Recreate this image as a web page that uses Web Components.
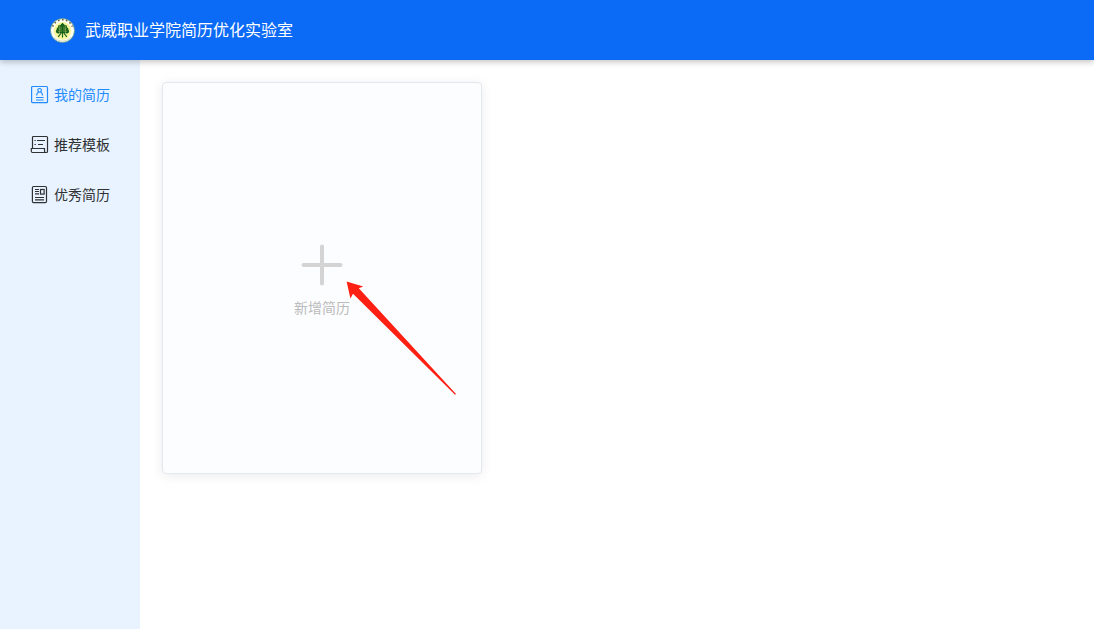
<!DOCTYPE html>
<html lang="zh-CN">
<head>
<meta charset="utf-8">
<meta name="viewport" content="width=device-width, initial-scale=1">
<title>武威职业学院简历优化实验室</title>
<style>
body { margin: 0; font-family: "Liberation Sans", "Noto Sans CJK SC", sans-serif; font-size: 14px; color: #303133; background: #fff; }
</style>
</head>
<body>
<resume-app></resume-app>

<template id="app-tpl">
<style>
:host { display: flex; flex-direction: column; min-height: 100vh; }
.body { display: flex; flex: 1; }
main { flex: 1; padding: 22px; }
</style>
<lab-header>武威职业学院简历优化实验室</lab-header>
<div class="body">
  <side-nav>
    <nav-item active>
      <svg slot="icon" width="20" height="20" viewBox="0 0 20 20" fill="none" stroke="currentColor" stroke-width="1.2"><rect x="1.6" y="1.5" width="15.9" height="16.2" rx="1"/><circle cx="9.6" cy="5.3" r="1.8"/><path d="M6.6 10.6q0-2.4 2-3.6M12.6 10.6q0-2.4-2-3.6M6 12.5h7.6M6 15h7.6"/></svg>
      我的简历
    </nav-item>
    <nav-item>
      <svg slot="icon" width="20" height="20" viewBox="0 0 20 20" fill="none" stroke="currentColor" stroke-width="1.2"><path d="M2.5 13.5V2.5Q2.5 1.5 3.5 1.5H16.5Q17.5 1.5 17.5 2.5V16.5Q17.5 17.5 16.5 17.5H2.5Q1.3 17.5 1.3 16V13.5H14.5V16.2Q14.5 17.5 15.8 17.5M4.5 5.5h1.3M7 5.5h8M4.5 9.5h1.3M8 9.5h5"/></svg>
      推荐模板
    </nav-item>
    <nav-item>
      <svg slot="icon" width="20" height="20" viewBox="0 0 20 20" fill="none" stroke="currentColor" stroke-width="1.2"><rect x="2.4" y="1.5" width="14.1" height="16.2" rx="1.2"/><path d="M5 4.5h4M5 6.5h4M5 8.8h4M5 12.5h9M5 14.8h9"/><rect x="10.5" y="4.5" width="3.6" height="4.6"/></svg>
      优秀简历
    </nav-item>
  </side-nav>
  <main><add-card>新增简历</add-card></main>
</div>
</template>

<template id="header-tpl">
<style>
:host { display: block; position: relative; z-index: 1; }
header { display: flex; align-items: center; gap: 10px; height: 60px; padding: 0 50px; background: #0b6af6; color: #fff; box-shadow: 0 2px 6px rgba(0,0,0,.24); }
h1 { margin: 0; padding-top: 2px; font-size: 16px; line-height: 24px; font-weight: 400; }
svg { flex: none; }
</style>
<header>
  <svg width="25" height="25" viewBox="0 0 25 25" aria-hidden="true">
    <circle cx="12.5" cy="12.5" r="12" fill="#fffff4" stroke="#4f927e" stroke-width=".7"/>
    <path d="M2.6 8.6A10.6 10.6 0 0 1 22.4 8.6" fill="none" stroke="#6e6040" stroke-width="1.6" stroke-dasharray="1.6 2.4"/>
    <path d="M4.2 19A10.4 10.4 0 0 0 20.8 19" fill="none" stroke="#d8d8c0" stroke-width="1"/>
    <circle cx="12.5" cy="12.8" r="8.9" fill="#f8f69c"/>
    <g fill="#14601a">
      <path d="M12.5 4.8 15 7.2V15h-5V7.2Z"/>
      <path d="M9.7 6.8Q7.8 7.2 8 9.2 6.2 9.8 6.6 11.7 5.2 12.8 6.2 14.6 7.6 16.2 9.7 15.2ZM15.3 6.8Q17.2 7.2 17 9.2 18.8 9.8 18.4 11.7 19.8 12.8 18.8 14.6 17.4 16.2 15.3 15.2Z"/>
    </g>
    <path d="M12.5 14.5v5M11.2 15 8.2 18.8M13.8 15l3 3.8" fill="none" stroke="#14601a" stroke-width="1.2"/>
    <path d="M11 8.5v5.5M14 8.5v5.5M8.3 10.2l1.8 1.6M16.7 10.2l-1.8 1.6M7.8 13l2 1M17.2 13l-2 1" fill="none" stroke="#c4cf62" stroke-width=".5"/>
  </svg>
  <h1><slot></slot></h1>
</header>
</template>

<template id="nav-tpl">
<style>
:host { display: block; flex: none; background: #e8f3ff; }
nav { width: 140px; padding-top: 10px; }
</style>
<nav><slot></slot></nav>
</template>

<template id="item-tpl">
<style>
:host { display: block; color: #303133; }
:host([active]) { color: #1f8bff; }
a { display: flex; align-items: center; gap: 4px; height: 50px; padding-left: 30px; color: inherit; text-decoration: none; line-height: 20px; }
.icon { display: flex; }
</style>
<a href="#"><span class="icon"><slot name="icon"></slot></span><span><slot></slot></span></a>
</template>

<template id="card-tpl">
<style>
:host { display: block; position: relative; max-width: 320px; }
button { display: flex; flex-direction: column; align-items: center; justify-content: center; width: 100%; height: 392px; padding: 0; border: 1px solid #e4e7ed; border-radius: 4px; background: #fcfdff; box-shadow: 0 2px 12px rgba(0,0,0,.08); font: inherit; color: #bbb; line-height: 26px; cursor: pointer; }
.arrow { position: absolute; left: 184px; top: 199px; pointer-events: none; }
</style>
<button type="button">
  <svg width="60" height="60" viewBox="0 0 60 60" aria-hidden="true"><path d="M30 11.5v37M11.5 30h37" stroke="#d4d4d4" stroke-width="4" stroke-linecap="round"/></svg>
  <span><slot></slot></span>
</button>
<svg class="arrow" width="112" height="116" viewBox="0 0 112 116" aria-hidden="true"><path d="M.6.6 17.2 5.6 12.8 7.3 110 113 109 113.8 7 12.7 4.4 17.5Z" fill="#ff2014"/></svg>
</template>

<script>
const define = (name, templateId) => customElements.define(name, class extends HTMLElement {
  constructor() {
    super();
    this.attachShadow({ mode: "open" }).append(document.getElementById(templateId).content.cloneNode(true));
  }
});
define("lab-header", "header-tpl");
define("side-nav", "nav-tpl");
define("nav-item", "item-tpl");
define("add-card", "card-tpl");
define("resume-app", "app-tpl");
</script>
</body>
</html>
